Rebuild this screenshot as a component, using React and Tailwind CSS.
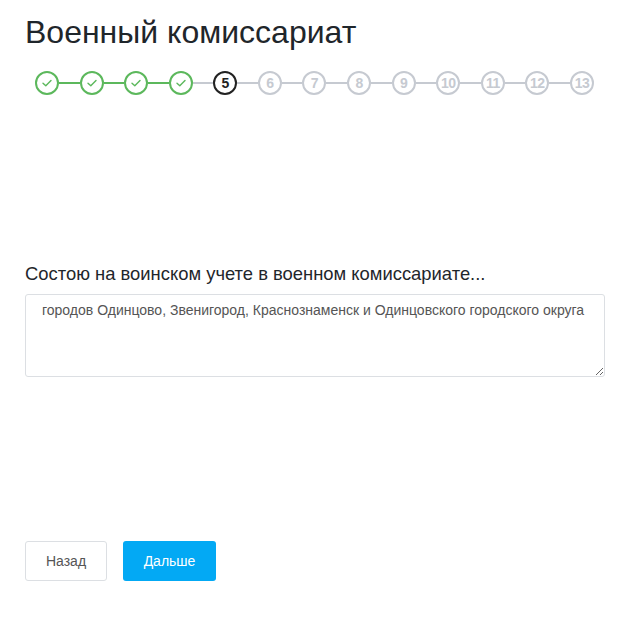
import React from 'react';

const steps = [1, 2, 3, 4, 5, 6, 7, 8, 9, 10, 11, 12, 13];
const current = 5;

function Check() {
  return (
    <svg width="14" height="14" viewBox="0 0 14 14" fill="none">
      <path d="M3 7.2 L5.8 9.8 L11 4.4" stroke="#5cb85c" strokeWidth="1.4" strokeLinecap="round" strokeLinejoin="round" />
    </svg>
  );
}

function Step({ n }) {
  if (n < current) {
    return (
      <div className="flex h-6 w-6 shrink-0 items-center justify-center rounded-full border-2 border-[#5cb85c] bg-white">
        <Check />
      </div>
    );
  }
  if (n === current) {
    return (
      <div className="flex h-6 w-6 shrink-0 items-center justify-center rounded-full border-2 border-[#222] bg-white text-[14px] font-bold text-[#222]">
        {n}
      </div>
    );
  }
  return (
    <div className="flex h-6 w-6 shrink-0 items-center justify-center rounded-full border-2 border-[#c6cad1] bg-white text-[14px] font-bold tracking-[-0.5px] text-[#c6cad1]">
      {n}
    </div>
  );
}

export default function App() {
  return (
    <div className="min-h-[622px] bg-white px-[25px] pt-[13px] font-['Liberation_Sans',Arial,sans-serif]">
      <h1 className="text-[32px] leading-[38px] text-[#1f262b]">Военный комиссариат</h1>

      <div className="ml-[10px] mt-[20px] flex w-[559px] items-center">
        {steps.map((n, i) => (
          <React.Fragment key={n}>
            {i > 0 && (
              <div className={'h-[2px] flex-1 ' + (n <= current - 1 ? 'bg-[#5cb85c]' : 'bg-[#c6cad1]')} />
            )}
            <Step n={n} />
          </React.Fragment>
        ))}
      </div>

      <div className="mt-[167px] text-[18.4px] leading-[24px] text-[#1f262b]">
        Состою на воинском учете в военном комиссариате...
      </div>

      <textarea
        className="mt-[8px] block h-[83px] w-[580px] resize-y rounded-[3px] border border-[#dcdfe3] px-[16px] pt-[5px] pb-[4px] text-[14px] leading-[20px] text-[#555] outline-none"
        defaultValue="городов Одинцово, Звенигород, Краснознаменск и Одинцовского городского округа"
        spellCheck={false}
      />

      <div className="mt-[164px] flex gap-[16px]">
        <button className="h-[40px] w-[82px] rounded-[3px] border border-[#dcdfe3] bg-white text-[14px] text-[#555]">
          Назад
        </button>
        <button className="h-[40px] w-[93px] rounded-[3px] bg-[#03a9f4] text-[14px] text-white">
          Дальше
        </button>
      </div>
    </div>
  );
}
